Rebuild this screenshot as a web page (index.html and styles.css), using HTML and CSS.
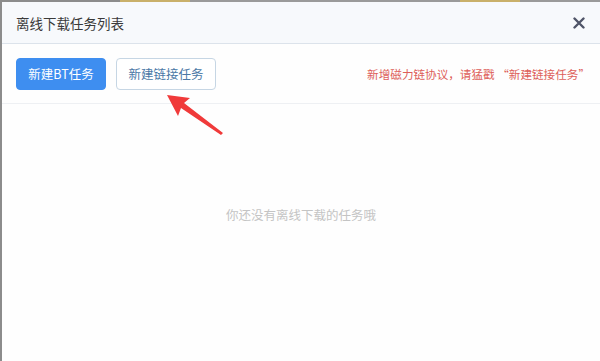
FILE: index.html
```html
<!DOCTYPE html>
<html lang="zh">
<head>
<meta charset="utf-8">
<link rel="stylesheet" href="styles.css">
</head>
<body>
<div class="backdrop">
  <div class="modal">
    <div class="header">
      <span class="title">离线下载任务列表</span>
      <svg class="close" width="12" height="12" viewBox="0 0 12 12">
        <path d="M1.5 1.5 L10.5 10.5 M10.5 1.5 L1.5 10.5" stroke="#4f5468" stroke-width="2.4" stroke-linecap="round"/>
      </svg>
    </div>
    <div class="toolbar">
      <button class="btn btn-primary">新建BT任务</button>
      <button class="btn btn-default">新建链接任务</button>
      <span class="notice">新增磁力链协议，请猛戳 “新建链接任务”</span>
    </div>
    <div class="body">
      <span class="empty">你还没有离线下载的任务哦</span>
    </div>
  </div>
  <svg class="arrow" width="70" height="50" viewBox="0 0 70 50">
    <polygon points="0,0 23,3 17,8 56,38 54,40 14,13 11,21" fill="#f03a3a"/>
  </svg>
</div>
</body>
</html>
```

FILE: styles.css
```css
* { box-sizing: border-box; }
html, body { margin: 0; padding: 0; }
body {
  width: 600px;
  height: 361px;
  overflow: hidden;
  background: #8c8c8c;
  font-family: "Noto Sans CJK SC", "Noto Sans", sans-serif;
}
.backdrop {
  position: relative;
  width: 600px;
  height: 361px;
  padding: 2px 0 0 2px;
  background: linear-gradient(to right, #8c8c8c 0, #8c8c8c 120px, #c9b06a 120px, #c9b06a 190px, #9a9a9a 190px, #9a9a9a 460px, #c9b06a 460px, #c9b06a 520px, #9a9a9a 520px);
  background-size: 100% 2px;
  background-repeat: no-repeat;
  background-color: #8c8c8c;
}
.modal {
  width: 598px;
  height: 359px;
  background: #fefefe;
  display: flex;
  flex-direction: column;
}
.header {
  height: 42px;
  flex: none;
  background: #f7f9fc;
  border-bottom: 1px solid #dce3eb;
  display: flex;
  align-items: center;
  justify-content: space-between;
  padding: 0 14px 0 14px;
}
.title {
  font-size: 13.5px;
  color: #3a3a3a;
}
.close {
  display: block;
  margin-right: 1px;
}
.toolbar {
  height: 60px;
  flex: none;
  display: flex;
  align-items: center;
  padding: 0 10px 0 14px;
  border-bottom: 1px solid #eef0f3;
  gap: 10px;
}
.btn {
  height: 32px;
  border-radius: 4px;
  font-family: "Noto Sans CJK SC", sans-serif;
  font-size: 12.5px;
  padding: 0;
  cursor: pointer;
}
.btn-primary {
  width: 90px;
  background: #3e8ef0;
  border: 1px solid #3e8ef0;
  color: #ffffff;
}
.btn-default {
  width: 100px;
  background: #ffffff;
  border: 1px solid #c6d6e4;
  color: #4a78a6;
}
.notice {
  margin-left: auto;
  font-size: 11.6px;
  color: #dd5e5a;
}
.body {
  flex: 1;
  display: flex;
  align-items: center;
  justify-content: center;
  padding-bottom: 36px;
}
.empty {
  font-size: 12.5px;
  color: #c4c4c4;
}
.arrow {
  position: absolute;
  left: 167px;
  top: 95px;
}
```
